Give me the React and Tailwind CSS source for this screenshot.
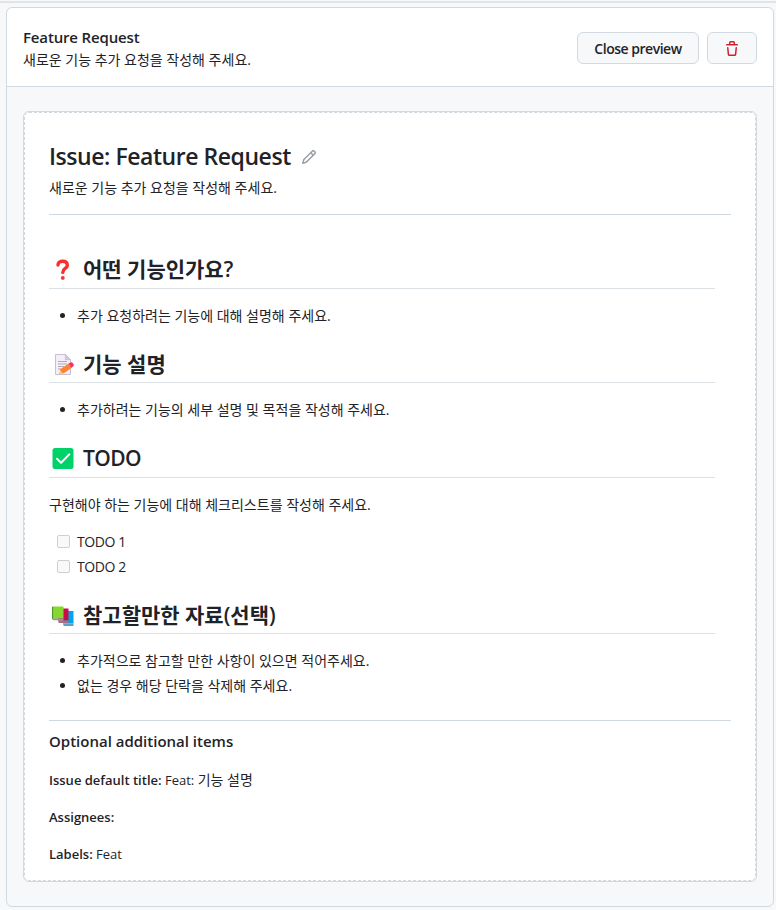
const base = "font-['Open_Sans','Noto_Sans_CJK_KR',sans-serif]";

function TrashIcon() {
  return (
    <svg className="mt-px" width="16" height="16" viewBox="0 0 16 16" fill="#cf222e">
      <path d="M11 1.75V3h2.25a.75.75 0 0 1 0 1.5H2.75a.75.75 0 0 1 0-1.5H5V1.75C5 .784 5.784 0 6.75 0h2.5C10.216 0 11 .784 11 1.75ZM4.496 6.675l.66 6.6a.25.25 0 0 0 .249.225h5.19a.25.25 0 0 0 .249-.225l.66-6.6a.75.75 0 0 1 1.492.149l-.66 6.6A1.748 1.748 0 0 1 10.595 15h-5.19a1.75 1.75 0 0 1-1.741-1.575l-.66-6.6a.75.75 0 1 1 1.492-.15ZM6.5 1.75V3h3V1.75a.25.25 0 0 0-.25-.25h-2.5a.25.25 0 0 0-.25.25Z" />
    </svg>
  );
}

function PencilIcon() {
  return (
    <svg width="16" height="16" viewBox="0 0 16 16" fill="#9a9fa5">
      <path d="M11.013 1.427a1.75 1.75 0 0 1 2.474 0l1.086 1.086a1.75 1.75 0 0 1 0 2.474l-8.61 8.61c-.21.21-.47.364-.756.445l-3.251.93a.75.75 0 0 1-.927-.928l.929-3.25c.081-.286.235-.547.445-.758l8.61-8.61Zm.176 4.823L9.75 4.81l-6.286 6.287a.253.253 0 0 0-.064.108l-.558 1.953 1.953-.558a.253.253 0 0 0 .108-.064Zm1.238-3.763a.25.25 0 0 0-.354 0L10.811 3.75l1.439 1.44 1.263-1.263a.25.25 0 0 0 0-.354Z" />
    </svg>
  );
}

function QuestionIcon() {
  return (
    <svg width="28" height="28" viewBox="0 0 28 28">
      <path d="M9 10C9 7.4 11.2 6.3 13.6 6.3c2.8 0 4.7 1.4 4.7 3.9 0 3.5-4.5 3.1-4.5 7.2" fill="none" stroke="#f92f2f" strokeWidth="3.4" strokeLinecap="round" />
      <circle cx="13.8" cy="22.9" r="1.9" fill="#f92f2f" />
    </svg>
  );
}

function MemoIcon() {
  return (
    <svg width="28" height="28" viewBox="0 0 28 28">
      <path d="M6.5 4.5h9.8l5.2 5.2v14.8h-15z" fill="#f3eef8" stroke="#c9bfd3" />
      <path d="M16.3 4.5v5.2h5.2z" fill="#d3c9dc" stroke="#bfb4ca" strokeWidth=".6" />
      <path d="M9 11.5h9M9 14h9M9 16.5h6M9 19h3" stroke="#b3a9bd" />
      <path d="m10.3 24 1.3-4.9 7.8-5.3 3 4.2-7.2 5z" fill="#ff822d" />
      <path d="m10.3 24 1-3.5 2.5 2.8z" fill="#ffce7c" />
      <path d="m19.4 13.8 2-1.4c1.5-.7 4.3 2 3.1 3.6L22.4 18z" fill="#f8315d" />
    </svg>
  );
}

function CheckIcon() {
  return (
    <svg width="28" height="28" viewBox="0 0 28 28">
      <rect x="3.5" y="4" width="21" height="21" rx="2.5" fill="#00d26a" />
      <path d="m8 14.7 4.1 4 8.2-8.3" fill="none" stroke="#fff" strokeWidth="2" strokeLinecap="round" strokeLinejoin="round" />
    </svg>
  );
}

function BooksIcon() {
  return (
    <svg width="28" height="28" viewBox="0 0 28 28">
      <path d="M14 10h10.5v12.5H14z" fill="#00a6ed" />
      <path d="M14 22.5h10.5V25h-9.8z" fill="#5c9fc4" />
      <path d="M9 7.5h10.5v12H9z" fill="#ca0b4a" />
      <path d="M9 19.5h10.5V22H9.8z" fill="#a36f86" />
      <path d="M3.5 5.5h11v11.8h-11z" fill="#86d72f" />
      <path d="M3.5 17.3h11v1.9h-10z" fill="#8f9d87" />
      <path d="M3.1 5.8h1v13l-1-.8z" fill="#44911b" />
    </svg>
  );
}

function Heading({ icon, children, className }) {
  return (
    <h2 className={`flex w-[666px] items-start border-b border-[#dce1e6] text-[21px] leading-[28px] font-semibold ${className}`}>
      <span className="mr-[6px] block h-7 w-7 shrink-0">{icon}</span>
      {children}
    </h2>
  );
}

function Bullet({ children }) {
  return (
    <li className="flex h-[25px] items-center">
      <span className="mr-[12px] ml-[11px] h-[5px] w-[5px] rounded-full bg-[#1f2328]" />
      <span>{children}</span>
    </li>
  );
}

function Todo({ children }) {
  return (
    <li className="flex h-[25px] items-center">
      <span className="mr-[7px] ml-2 h-[13px] w-[13px] rounded-[2px] border border-[#cfcfcf] bg-[#f9f9f9]" />
      <span className="tracking-[-0.4px]">{children}</span>
    </li>
  );
}

export default function App() {
  return (
    <div className={`${base} h-[910px] w-[776px] overflow-hidden bg-[#f6f8fa] pt-px text-[14px] leading-[21px] whitespace-nowrap text-[#1f2328]`}>
      <div className="h-[2px] bg-[#e1e4e4]" />
      <section className="mt-1 ml-[6px] h-[900px] w-[768px] rounded-md border border-[#d1d9e0]">
        <header className="flex h-[79px] justify-between rounded-t-md border-b border-[#d1d9e0] bg-white pr-4 pl-4">
          <div className="pt-[19px]">
            <h3 className="h-[22px] text-[15px] leading-[20px] font-semibold tracking-[-0.15px]">Feature Request</h3>
            <p className="leading-[22px]">새로운 기능 추가 요청을 작성해 주세요.</p>
          </div>
          <div className="flex gap-2 pt-6">
            <button className="flex h-8 w-[122px] items-center justify-center rounded-md border border-[#d1d9e0] bg-[#f6f8fa] font-semibold tracking-[-0.48px]">Close preview</button>
            <button className="flex h-8 w-[50px] items-center justify-center rounded-md border border-[#d1d9e0] bg-[#f6f8fa]"><TrashIcon /></button>
          </div>
        </header>
        <div className="mt-6 ml-4 h-[771px] w-[734px] rounded-md border border-[#d1d9e0] bg-white">
          <div className="h-[769px] rounded-[5px] border border-dashed border-[#d1d9e0] px-6">
            <div className="flex h-[63px] items-center pt-[25px]">
              <h1 className="mr-[10px] h-[36px] text-[23px] leading-[34px] font-semibold tracking-[-0.45px]">Issue: Feature Request</h1>
              <PencilIcon />
            </div>
            <p className="h-[39px] border-b border-[#d1d9e0] leading-[24px]">새로운 기능 추가 요청을 작성해 주세요.</p>
            <Heading icon={<QuestionIcon />} className="mt-[40px] h-[34px]">어떤 기능인가요?</Heading>
            <ul className="mt-[14px]"><Bullet>추가 요청하려는 기능에 대해 설명해 주세요.</Bullet></ul>
            <Heading icon={<MemoIcon />} className="mt-[22px] h-[33px]">기능 설명</Heading>
            <ul className="mt-[14px]"><Bullet>추가하려는 기능의 세부 설명 및 목적을 작성해 주세요.</Bullet></ul>
            <Heading icon={<CheckIcon />} className="mt-[22px] h-[34px] tracking-[-0.6px]">TODO</Heading>
            <p className="mt-4 h-[21px]">구현해야 하는 기능에 대해 체크리스트를 작성해 주세요.</p>
            <ul className="mt-[14px]"><Todo>TODO 1</Todo><Todo>TODO 2</Todo></ul>
            <Heading icon={<BooksIcon />} className="mt-[20px] h-[35px] pt-[2px]">참고할만한 자료(선택)</Heading>
            <ul className="mt-[14px]">
              <Bullet>추가적으로 참고할 만한 사항이 있으면 적어주세요.</Bullet>
              <Bullet>없는 경우 해당 단락을 삭제해 주세요.</Bullet>
            </ul>
            <div className="mt-[22px] border-t border-[#d1d9e0] pt-[9px]">
              <h4 className="h-6 text-[15px] leading-[22px] font-semibold">Optional additional items</h4>
              <p className="mt-4 h-[21px] text-[13px] leading-[20px]"><b className="font-semibold">Issue default title:</b> Feat: <span className="text-[14px]">기능 설명</span></p>
              <p className="mt-4 text-[13px]"><b className="font-semibold">Assignees:</b></p>
              <p className="mt-4 text-[13px]"><b className="font-semibold">Labels:</b> Feat</p>
            </div>
          </div>
        </div>
      </section>
    </div>
  );
}
